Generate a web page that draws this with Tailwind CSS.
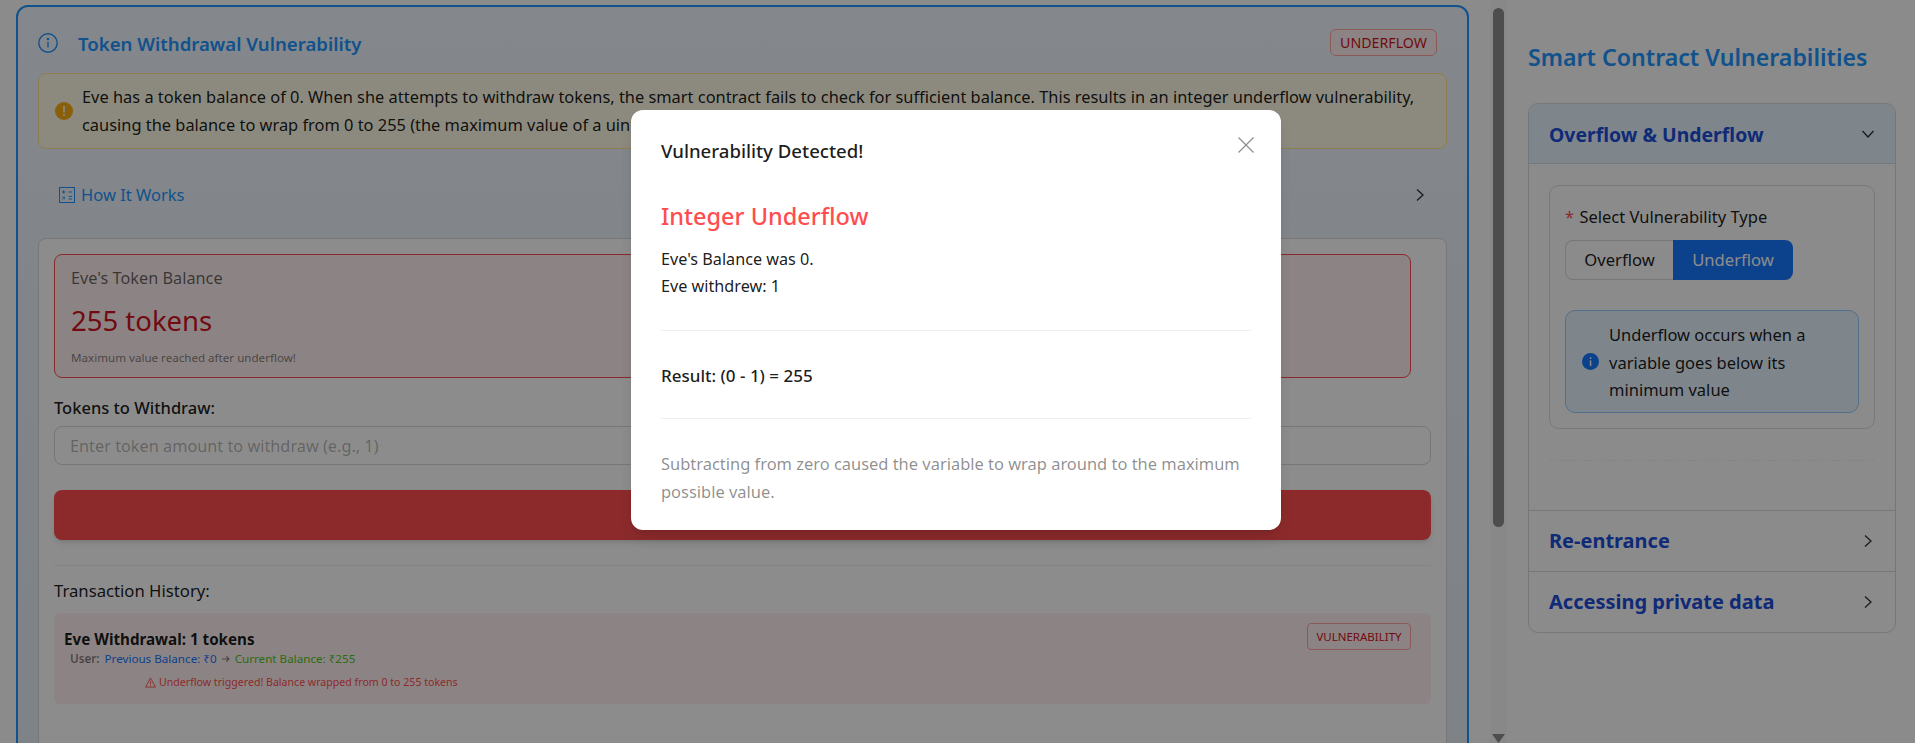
<!DOCTYPE html>
<html lang="en">
<head>
  <meta charset="UTF-8" />
  <title>Smart Contract Vulnerabilities</title>
  <script src="https://cdn.jsdelivr.net/npm/@tailwindcss/browser@4"></script>
</head>
<body class="font-['Noto_Sans',sans-serif] text-[16px] text-black/90">
<div class="relative flex h-[743px] w-[1915px] overflow-hidden bg-[#fdfdfd]">

  <!-- Left panel -->
  <main class="w-[1490px] shrink-0 pl-4 pt-[5px]">
    <section class="h-[900px] w-[1453px] rounded-xl border-2 border-[#2196ff] bg-gradient-to-b from-[#f0f6ff] to-[#e4ecf5] px-5 pt-[22px]">
      <div class="flex h-[27px] items-center justify-between pr-[10px]">
        <div class="flex items-center gap-5">
          <svg class="h-5 w-5 text-[#2196ff]" viewBox="0 0 20 20" fill="none" stroke="currentColor" stroke-width="1.4"><circle cx="10" cy="10" r="9.2"/><path d="M10 8.800v5.600"/><circle cx="10" cy="6" r=".6" fill="currentColor"/></svg>
          <h2 class="pt-[3px] text-[18.6px] font-semibold text-[#2196ff]">Token Withdrawal Vulnerability</h2>
        </div>
        <span class="flex h-[27px] w-[107px] items-center justify-center rounded-md border border-[#ffa39e] bg-[#fff1f0] text-[14.200px] text-[#cf1322]">UNDERFLOW</span>
      </div>

      <div class="mt-[17px] flex h-[76px] w-[1409px] items-center gap-[9px] rounded-lg border border-[#ffe58f] bg-[#fffbe6] pl-4 pr-4">
        <svg class="h-[18px] w-[18px] shrink-0" viewBox="0 0 18 18"><circle cx="9" cy="9" r="9" fill="#faad14"/><rect x="8.200" y="4" width="1.600" height="6.500" fill="#fff"/><rect x="8.200" y="12" width="1.600" height="1.800" fill="#fff"/></svg>
        <p class="text-[16.400px] leading-7">Eve has a token balance of 0. When she attempts to withdraw tokens, the smart contract fails to check for sufficient balance. This results in an integer underflow vulnerability, causing the balance to wrap from 0 to 255 (the maximum value of a uint8).</p>
      </div>

      <div class="mt-6 flex h-11 w-[1409px] items-center justify-between pl-[21px] pr-5 text-[#2196ff]">
        <div class="flex items-center gap-[6px]">
          <svg class="h-4 w-4" viewBox="0 0 16 16" fill="none" stroke="currentColor" stroke-width="1"><rect x=".5" y=".5" width="15" height="15"/><path d="M3 5h3.400M4.700 3.300v3.400M9.600 5H13M3.400 9.600l2.600 2.600M6 9.600l-2.600 2.600M9.600 9.400H13M9.600 12H13"/></svg>
          <span class="text-[16.500px]">How It Works</span>
        </div>
        <svg class="h-3.5 w-3.5 text-black/80" viewBox="0 0 14 14" fill="none" stroke="currentColor" stroke-width="1.3"><path d="M4 1.500 10 7l-6 5.500"/></svg>
      </div>

      <!-- Inner card -->
      <div class="mt-[21px] h-[600px] w-[1409px] rounded-lg border border-[#d9d9d9] bg-white p-[15px]">
        <div class="h-[124px] w-[1357px] rounded-lg border border-[#ff4d4f] bg-[#fff1f0] pl-4 pt-3">
          <p class="text-[16.300px] leading-[22px] text-black/60">Eve's Token Balance</p>
          <p class="mt-[11px] text-[27.500px] leading-[42px] text-[#cf1322]">255 tokens</p>
          <p class="mt-2 text-[11.600px] leading-4 text-black/50">Maximum value reached after underflow!</p>
        </div>

        <p class="mt-[18px] text-[16.500px] font-medium leading-6">Tokens to Withdraw:</p>
        <input class="mt-[6px] block h-[39px] w-[1377px] rounded-lg border border-[#d9d9d9] bg-white px-[15px] text-[16.300px] placeholder:text-black/30" placeholder="Enter token amount to withdraw (e.g., 1)" />
        <button class="mt-[25px] block h-[50px] w-[1377px] rounded-lg bg-[#ff4d4f] text-white shadow-md">Withdraw Tokens</button>

        <div class="mt-[25px] h-px w-[1377px] bg-[#f0f0f0]"></div>
        <p class="mt-[13px] text-[16.700px] leading-6">Transaction History:</p>

        <div class="mt-[10px] flex h-[91px] w-[1377px] items-start justify-between rounded-md bg-[#fff1f0] pl-[10px] pr-5 pt-[10px]">
          <div class="pt-[6px]">
            <p class="text-[15.200px] font-bold leading-5">Eve Withdrawal: 1 tokens</p>
            <div class="mt-[2px] flex items-center pl-[6px] text-[11.650px] leading-4">
              <span class="font-semibold text-black/50">User:</span>
              <span class="ml-[5px] text-[#1677ff]">Previous Balance: ₹0</span>
              <svg class="mx-[5px] h-2 w-2 text-black/50" viewBox="0 0 8 8" fill="none" stroke="currentColor" stroke-width="1.100"><path d="M0 4h7M4.400 1.400 7 4 4.400 6.600"/></svg>
              <span class="text-[#52c41a]">Current Balance: ₹255</span>
            </div>
            <div class="mt-[7px] flex items-center gap-[3px] pl-[81px] text-[10.600px] leading-4 text-[#ff4d4f]">
              <svg class="h-[11px] w-[11px]" viewBox="0 0 12 12" fill="none" stroke="currentColor" stroke-width="1"><path d="M6 1 11.400 11H.6Z"/><path d="M6 4.600v3.400M6 8.900v1"/></svg>
              <span>Underflow triggered! Balance wrapped from 0 to 255 tokens</span>
            </div>
          </div>
          <span class="flex h-[27px] w-[104px] items-center justify-center rounded-[4px] border border-[#ffa39e] bg-[#fff1f0] text-[11.500px] text-[#cf1322]">VULNERABILITY</span>
        </div>
      </div>
    </section>
  </main>

  <!-- Scrollbar -->
  <div class="relative w-[17px] shrink-0 bg-[#f8f8f8]">
    <div class="ml-[3px] mt-2 h-[519px] w-[11px] rounded-full bg-[#8c8c8c]"></div>
    <svg class="absolute bottom-0 left-[2px] h-[9px] w-[13px] text-[#8c8c8c]" viewBox="0 0 13 9"><path d="M0 0h13L6.500 9Z" fill="currentColor"/></svg>
  </div>

  <!-- Right panel -->
  <aside class="w-[408px] shrink-0 pl-[21px] pt-[41px]">
    <h2 class="text-[23.150px] font-semibold leading-8 text-[#2196ff]">Smart Contract Vulnerabilities</h2>
    <div class="mt-[30px] w-[368px] overflow-hidden rounded-[10px] border border-[#d9d9d9]">
      <div class="flex h-[60px] items-center justify-between border-b border-[#d9d9d9] bg-[#e6f4ff] pl-5 pr-5">
        <span class="pt-[2px] text-[19.400px] font-bold text-[#1d4ed8]">Overflow &amp; Underflow</span>
        <svg class="h-3.5 w-3.5 text-black/80" viewBox="0 0 14 14" fill="none" stroke="currentColor" stroke-width="1.3"><path d="M1.500 4 7 10l5.500-6"/></svg>
      </div>
      <div class="h-[347px] border-b border-[#d9d9d9] px-5 pt-[21px]">
        <div class="h-[244px] w-[326px] rounded-[10px] border border-[#d9d9d9] pl-[15px] pt-[19px]">
          <p class="text-[16.500px] leading-6"><span class="text-[#ff4d4f]">*</span> <span class="ml-px">Select Vulnerability Type</span></p>
          <div class="mt-[11px] flex h-10 w-[228px] text-[16.600px]">
            <span class="flex w-[108px] items-center justify-center rounded-l-lg border border-r-0 border-[#d9d9d9]">Overflow</span>
            <span class="flex w-[120px] items-center justify-center rounded-r-lg bg-[#1677ff] text-white">Underflow</span>
          </div>
          <div class="mt-[30px] flex h-[103px] w-[294px] items-center gap-[10px] rounded-[10px] border border-[#91caff] bg-[#e6f4ff] pl-4">
            <svg class="h-[17px] w-[17px] shrink-0" viewBox="0 0 17 17"><circle cx="8.500" cy="8.500" r="8.500" fill="#1677ff"/><rect x="7.800" y="7.400" width="1.500" height="5.600" fill="#fff"/><rect x="7.800" y="4.200" width="1.500" height="1.700" fill="#fff"/></svg>
            <p class="w-[215px] pt-[2px] text-[16.500px] leading-[27.500px]">Underflow occurs when a variable goes below its minimum value</p>
          </div>
        </div>
        <div class="mt-[31px] w-[326px] border-t border-dashed border-[#f0f0f0]"></div>
      </div>
      <div class="flex h-[61px] items-center justify-between border-b border-[#d9d9d9] pl-5 pr-5">
        <span class="text-[20px] font-bold text-[#1d4ed8]">Re-entrance</span>
        <svg class="h-3.5 w-3.5 text-black/80" viewBox="0 0 14 14" fill="none" stroke="currentColor" stroke-width="1.3"><path d="M4 1.500 10 7l-6 5.500"/></svg>
      </div>
      <div class="flex h-[60px] items-center justify-between pl-5 pr-5">
        <span class="text-[20px] font-bold text-[#1d4ed8]">Accessing private data</span>
        <svg class="h-3.5 w-3.5 text-black/80" viewBox="0 0 14 14" fill="none" stroke="currentColor" stroke-width="1.3"><path d="M4 1.500 10 7l-6 5.500"/></svg>
      </div>
    </div>
  </aside>

  <!-- Modal overlay -->
  <div class="absolute inset-0 bg-black/45 pl-[631px] pt-[110px]">
    <div class="relative h-[420px] w-[650px] rounded-xl bg-white px-[30px] pt-[29px] shadow-lg">
      <svg class="absolute right-[27px] top-[27px] h-4 w-4 text-black/45" viewBox="0 0 16 16" fill="none" stroke="currentColor" stroke-width="1.200"><path d="M.5.5l15 15M15.500.5l-15 15"/></svg>
      <h3 class="text-[18.600px] font-medium leading-6">Vulnerability Detected!</h3>
      <p class="mt-[37px] text-[23.500px] font-medium leading-8 text-[#ff4d4f]">Integer Underflow</p>
      <p class="mt-[14px] text-[16.200px] leading-[27px]">Eve's Balance was 0.<br />Eve withdrew: 1</p>
      <div class="mt-[30px] h-px w-[590px] bg-[#f0f0f0]"></div>
      <p class="mt-[33px] text-[17px] font-medium leading-6">Result: (0 - 1) = 255</p>
      <div class="mt-[30px] h-px w-[590px] bg-[#f0f0f0]"></div>
      <p class="mt-[31px] w-[590px] text-[16.460px] leading-[27.500px] text-black/45">Subtracting from zero caused the variable to wrap around to the maximum possible value.</p>
    </div>
  </div>
</div>
</body>
</html>
